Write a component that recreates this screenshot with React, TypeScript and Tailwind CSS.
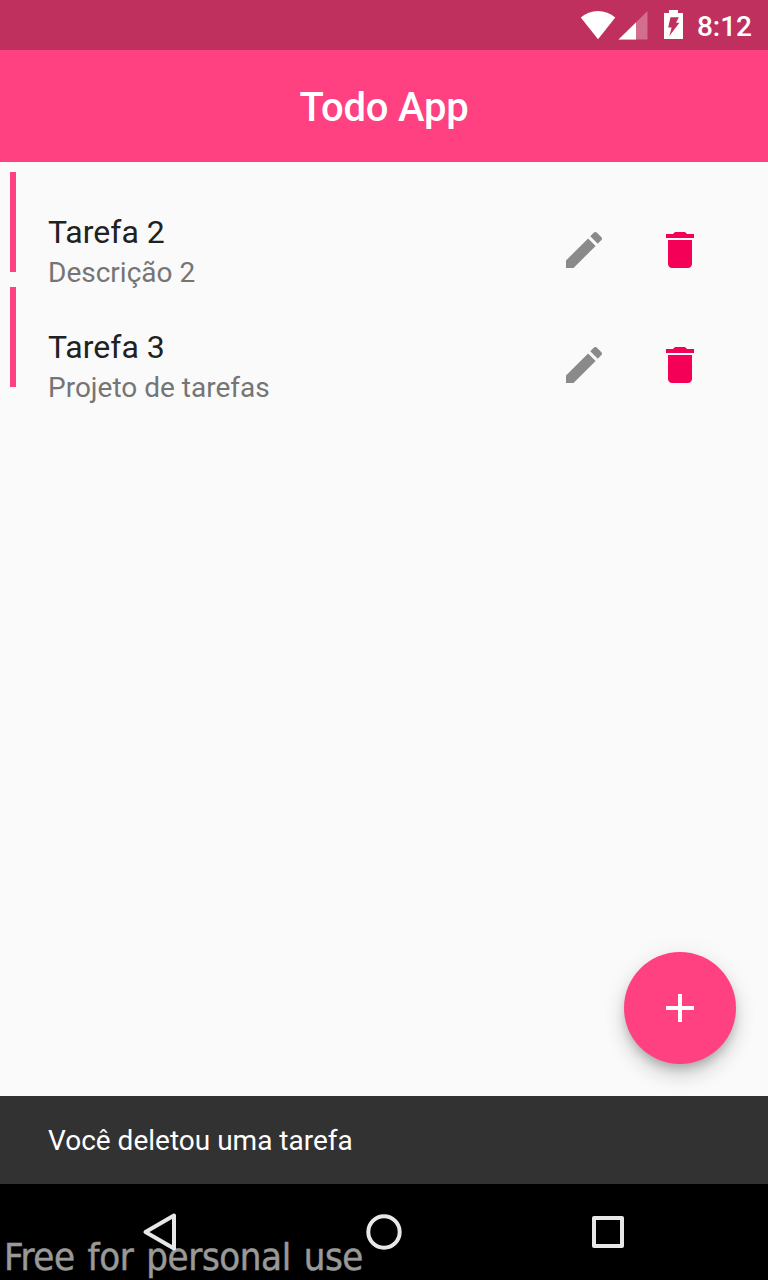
import React from 'react';

const tasks = [
  { title: 'Tarefa 2', description: 'Descrição 2' },
  { title: 'Tarefa 3', description: 'Projeto de tarefas' },
];

function StatusBar() {
  return (
    <div className="flex h-[50px] shrink-0 items-center justify-end bg-[#bf305f] pr-4 text-white">
      <svg className="h-[50px] w-[110px]" viewBox="578 0 110 50" fill="currentColor">
        <path d="M598 39.2 580.8 17.5C585.5 13.2 591.5 11 598 11s12.5 2.2 17.300 6.500L598 39.200z" />
        <path d="M647.500 11v28.500h-29z" fillOpacity=".3" />
        <path d="M636 22.500V39.500h-17.500z" />
        <path
          fillRule="evenodd"
          d="M669 10h9v3h5v26h-19V13h5zM670.500 17.200l-2.300 10.300h3.500l-2.400 8.500L679.500 22.700h-3.500l2.900-5.500z"
        />
      </svg>
      <span className="ml-[9px] pt-1 text-[28px] font-medium leading-none">8:12</span>
    </div>
  );
}

function TaskRow({ title, description }: { title: string; description: string }) {
  return (
    <li className="flex h-[100px] items-center border-l-[6px] border-[#ff4081] pl-8 pr-16">
      <div className="flex-1 pt-[61px]">
        <div className="text-[32px] leading-[40px] text-[#212121]">{title}</div>
        <div className="text-[28px] leading-[41px] text-[#757575]">{description}</div>
      </div>
      <div className="flex gap-12 pt-[56px]">
        <svg className="size-12" viewBox="0 0 24 24" fill="#8a8a8a">
          <path d="M3 17.250V21h3.750L17.810 9.940l-3.750-3.750L3 17.250zM20.710 7.040c.39-.39.39-1.020 0-1.410l-2.340-2.340c-.39-.39-1.020-.39-1.410 0l-1.830 1.830 3.750 3.750 1.830-1.830z" />
        </svg>
        <svg className="size-12" viewBox="0 0 24 24" fill="#f50057">
          <path d="M6 19c0 1.100.9 2 2 2h8c1.100 0 2-.9 2-2V7H6v12zM19 4h-3.500l-1-1h-5l-1 1H5v2h14V4z" />
        </svg>
      </div>
    </li>
  );
}

export default function App() {
  return (
    <div className="relative flex h-[1280px] w-[768px] flex-col overflow-hidden bg-[#fafafa] font-['Roboto',sans-serif]">
      <StatusBar />
      <header className="flex h-28 shrink-0 items-center justify-center bg-[#ff4081] pt-1">
        <h1 className="text-[40px] font-medium leading-none tracking-[-0.2px] text-white">Todo App</h1>
      </header>
      <main className="flex flex-1 flex-col justify-between">
        <ul className="flex flex-col gap-[15px] pl-[10px] pt-[10.4px]">
          {tasks.map((task) => (
            <TaskRow key={task.title} {...task} />
          ))}
        </ul>
        <button
          aria-label="+"
          className="mb-8 mr-8 flex size-28 items-center justify-center self-end rounded-full bg-[#ff4081] shadow-[0_6px_10px_-2px_rgba(0,0,0,0.2),0_12px_20px_0_rgba(0,0,0,0.14),0_2px_28px_0_rgba(0,0,0,0.06)]"
        >
          <svg className="size-12" viewBox="0 0 24 24" fill="#fff">
            <path d="M19 13h-6v6h-2v-6H5v-2h6V5h2v6h6v2z" />
          </svg>
        </button>
      </main>
      <div className="flex h-[88px] shrink-0 items-center bg-[#323232] px-12 pt-0.5 text-[28px] text-white">
        Você deletou uma tarefa
      </div>
      <nav className="flex h-24 shrink-0 items-center justify-between bg-black px-[136px]">
        <svg className="size-12" viewBox="0 0 48 48" fill="none" stroke="#e8e8e8" strokeWidth="4" strokeLinejoin="round">
          <path d="M38 7.500v33L9.500 24z" />
        </svg>
        <svg className="size-12" viewBox="0 0 48 48" fill="none" stroke="#e8e8e8" strokeWidth="4">
          <circle cx="24" cy="24" r="15.700" />
        </svg>
        <svg className="size-12" viewBox="0 0 48 48" fill="none" stroke="#e8e8e8" strokeWidth="4" strokeLinejoin="round">
          <rect x="10" y="10" width="28" height="28" />
        </svg>
      </nav>
      <div className="absolute bottom-0 left-[4px] whitespace-nowrap font-['DejaVu_Sans_Condensed','DejaVu_Sans',sans-serif] text-[38px] leading-[46px] tracking-[-0.4px] text-white opacity-60 [-webkit-text-stroke:0.4px_white] [word-spacing:2.5px]">
        Free for personal use
      </div>
    </div>
  );
}
